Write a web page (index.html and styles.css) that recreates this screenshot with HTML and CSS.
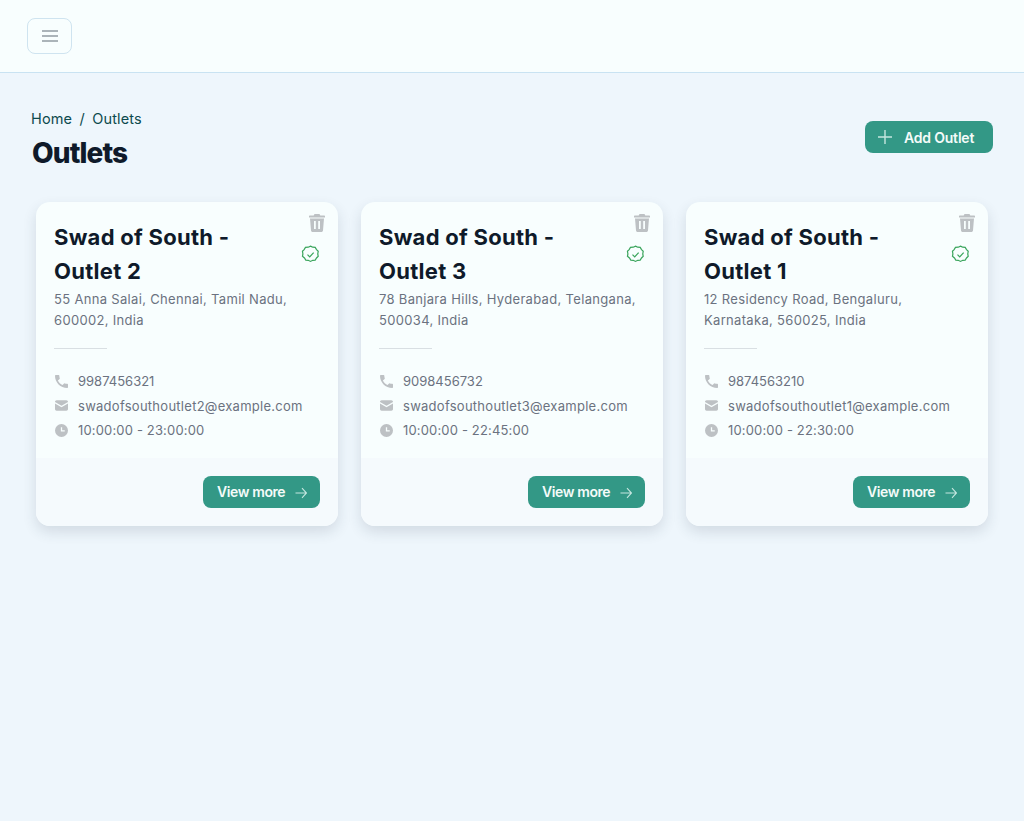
FILE: index.html
```html
<!DOCTYPE html>
<html lang="en">
<head>
<meta charset="utf-8">
<title>Outlets</title>
<link rel="stylesheet" href="styles.css">
</head>
<body>
<svg class="sprite" aria-hidden="true">
  <symbol id="i-trash" viewBox="0 0 16 18"><path fill="#bdc1c4" fill-rule="evenodd" d="M5.500 0h5l.8 1.500H15c.6 0 1 .4 1 1v1H0v-1c0-.6.4-1 1-1h3.700zM1 4.500h14l-1 12c-.1.9-.8 1.500-1.600 1.500H3.600c-.8 0-1.500-.6-1.600-1.500zM5 7v8h1.800V7zm4.200 0v8H11V7z"/></symbol>
  <symbol id="i-badge" viewBox="0 0 17 17"><path fill="none" stroke="#3ba55d" stroke-width="1.100" d="M8.500 1l2 1 2.200.2 1.200 1.900 1.500 1.500-.4 2.400.4 2.100-1.500 1.500-1.200 1.900-2.200.2-2 1-2-1-2.200-.2-1.200-1.900L1.300 10.100l.4-2.100-.4-2.400L2.800 4.100 4 2.200l2.500-.2z"/><path fill="none" stroke="#3ba55d" stroke-width="1.100" d="M5.800 8.600l2 2 3.500-3.800"/></symbol>
  <symbol id="i-phone" viewBox="3 3 18 18"><path fill="#bdc1c4" d="M7 10.500c1.400 2.800 3.600 5 6.500 6.500l2-2.200c.3-.3.700-.4 1-.2 1.100.4 2.500.6 3.500.6.600 0 1 .4 1 1V20c0 .6-.4 1-1 1C10.600 21 3 13.400 3 4c0-.6.400-1 1-1h4c.6 0 1 .4 1 1 0 1.300.2 2.500.6 3.600.1.300 0 .7-.2 1z"/></symbol>
  <symbol id="i-mail" viewBox="2 3 20 18"><path fill="#bdc1c4" d="M2 6.500C2 5.100 3.100 4 4.500 4h15C20.900 4 22 5.100 22 6.500v.3l-10 5.500L2 6.800zM2 9.100V17.500C2 18.900 3.100 20 4.500 20h15c1.400 0 2.500-1.100 2.500-2.500V9.100l-10 5.500z"/></symbol>
  <symbol id="i-clock" viewBox="2 2 20 20"><path fill="#bdc1c4" fill-rule="evenodd" d="M12 2a10 10 0 1 0 0 20 10 10 0 0 0 0-20zm1 5h-2v6.500h6v-2h-4z"/></symbol>
  <symbol id="i-arrow" viewBox="0 0 12 12"><path d="M.5 6h11M7 1.200L11.500 6 7 10.800" stroke="#c5e6df" stroke-width="1.100" fill="none"/></symbol>
</svg>
<header class="topbar">
  <button class="menu-btn" aria-label="Menu">
    <svg width="16" height="12" viewBox="0 0 16 12"><path d="M0 1h16M0 6h16M0 11h16" stroke="#5f6b75" stroke-width="1.100" fill="none"/></svg>
  </button>
</header>
<main class="page">
  <div class="page-head">
    <div>
      <nav class="crumbs"><span>Home</span><span>/</span><span>Outlets</span></nav>
      <h1 class="page-title">Outlets</h1>
    </div>
    <button class="btn btn-add">
      <svg width="14" height="14" viewBox="0 0 14 14"><path d="M7 0v14M0 7h14" stroke="#c5e6df" stroke-width="1.400" fill="none"/></svg>
      <span>Add Outlet</span>
    </button>
  </div>
  <section class="grid">
    <article class="card">
      <div class="card-body">
        <svg class="trash"><use href="#i-trash"/></svg>
        <div class="title-row">
          <h2 class="card-title">Swad of South - Outlet 2</h2>
          <svg class="badge"><use href="#i-badge"/></svg>
        </div>
        <p class="address">55 Anna Salai, Chennai, Tamil Nadu, 600002, India</p>
        <hr class="rule">
        <ul class="info">
          <li><svg class="ico"><use href="#i-phone"/></svg><span class="phone">9987456321</span></li>
          <li><svg class="ico"><use href="#i-mail"/></svg><span>swadofsouthoutlet2@example.com</span></li>
          <li><svg class="ico"><use href="#i-clock"/></svg><span class="hours">10:00:00 - 23:00:00</span></li>
        </ul>
      </div>
      <div class="card-foot">
        <button class="btn btn-more"><span class="more-label">View more</span><svg class="arrow"><use href="#i-arrow"/></svg></button>
      </div>
    </article>
    <article class="card">
      <div class="card-body">
        <svg class="trash"><use href="#i-trash"/></svg>
        <div class="title-row">
          <h2 class="card-title">Swad of South - Outlet 3</h2>
          <svg class="badge"><use href="#i-badge"/></svg>
        </div>
        <p class="address">78 Banjara Hills, Hyderabad, Telangana, 500034, India</p>
        <hr class="rule">
        <ul class="info">
          <li><svg class="ico"><use href="#i-phone"/></svg><span class="phone">9098456732</span></li>
          <li><svg class="ico"><use href="#i-mail"/></svg><span>swadofsouthoutlet3@example.com</span></li>
          <li><svg class="ico"><use href="#i-clock"/></svg><span class="hours">10:00:00 - 22:45:00</span></li>
        </ul>
      </div>
      <div class="card-foot">
        <button class="btn btn-more"><span class="more-label">View more</span><svg class="arrow"><use href="#i-arrow"/></svg></button>
      </div>
    </article>
    <article class="card">
      <div class="card-body">
        <svg class="trash"><use href="#i-trash"/></svg>
        <div class="title-row">
          <h2 class="card-title">Swad of South - Outlet 1</h2>
          <svg class="badge"><use href="#i-badge"/></svg>
        </div>
        <p class="address">12 Residency Road, Bengaluru, Karnataka, 560025, India</p>
        <hr class="rule">
        <ul class="info">
          <li><svg class="ico"><use href="#i-phone"/></svg><span class="phone">9874563210</span></li>
          <li><svg class="ico"><use href="#i-mail"/></svg><span>swadofsouthoutlet1@example.com</span></li>
          <li><svg class="ico"><use href="#i-clock"/></svg><span class="hours">10:00:00 - 22:30:00</span></li>
        </ul>
      </div>
      <div class="card-foot">
        <button class="btn btn-more"><span class="more-label">View more</span><svg class="arrow"><use href="#i-arrow"/></svg></button>
      </div>
    </article>
  </section>
</main>
</body>
</html>
```
FILE: styles.css
```css
* { box-sizing: border-box; }
html, body { margin: 0; padding: 0; }
body {
  min-height: 821px;
  background: #eef6fc;
  font-family: Inter, "Liberation Sans", sans-serif;
  color: #0f1a2a;
}
.sprite { display: none; }
.topbar {
  height: 73px;
  background: #f8fefe;
  border-bottom: 1px solid #c9e3f2;
  padding: 18px 27px;
}
.menu-btn {
  width: 45px;
  height: 36px;
  display: flex;
  align-items: center;
  justify-content: center;
  padding: 0;
  background: transparent;
  border: 1px solid #cfe4f0;
  border-radius: 8px;
}
.page { padding: 37px 31px 0 31px; }
.page-head {
  display: flex;
  justify-content: space-between;
  align-items: flex-start;
}
.crumbs {
  display: flex;
  gap: 7.5px;
  font-size: 14.5px;
  line-height: 18px;
  letter-spacing: 0.1px;
  color: #0c4a4e;
}
.page-title {
  margin: 8px 0 0 1px;
  font-size: 28px;
  line-height: 34px;
  font-weight: 800;
  letter-spacing: -0.9px;
  color: #0f1a2a;
}
.btn {
  display: inline-flex;
  align-items: center;
  height: 32px;
  border: 0;
  border-radius: 8px;
  background: #339886;
  color: #f4fbf9;
  font-family: Inter, "Liberation Sans", sans-serif;
  font-size: 14px;
  font-weight: 600;
}
.btn-add {
  width: 128px;
  padding: 0 0 0 13px;
  gap: 12px;
  margin-top: 11px;
  letter-spacing: -0.2px;
}
.btn-more {
  width: 117px;
  padding: 0 13px 0 14px;
  justify-content: space-between;
  letter-spacing: -0.4px;
}
.more-label { margin-bottom: 2px; }
.arrow { width: 12px; height: 12px; margin-top: 1px; }
.grid {
  display: grid;
  grid-template-columns: repeat(3, 302px);
  column-gap: 23px;
  margin: 32px 0 0 5px;
}
.card {
  height: 324px;
  display: flex;
  flex-direction: column;
  border-radius: 14px;
  overflow: hidden;
  background: #f8fefe;
  box-shadow: 0 6px 14px rgba(40, 60, 80, 0.14);
}
.card-body {
  position: relative;
  height: 256px;
  padding: 18px 18px 0;
}
.trash { position: absolute; top: 12px; right: 13px; width: 16px; height: 18px; }
.title-row {
  display: flex;
  align-items: center;
  justify-content: space-between;
}
.card-title {
  margin: 0;
  width: 200px;
  font-size: 22px;
  line-height: 34px;
  font-weight: 700;
  letter-spacing: 0.27px;
  color: #0f1a2a;
}
.badge { width: 19px; height: 19px; }
.address {
  margin: 1px 0 0;
  width: 262px;
  font-size: 13px;
  line-height: 21px;
  letter-spacing: 0.32px;
  color: #6b7280;
}
.rule {
  width: 53px;
  height: 1px;
  margin: 17px 0 0;
  border: 0;
  background: #d9dfe3;
}
.info {
  list-style: none;
  margin: 20px 0 0;
  padding: 0;
  font-size: 13px;
  letter-spacing: 0.27px;
  color: #6b7280;
}
.info li {
  display: flex;
  align-items: center;
  gap: 10px;
  height: 24.5px;
}
.info .phone { letter-spacing: 0; }
.info .hours { letter-spacing: 0.16px; }
.ico { width: 13px; height: 13px; margin-left: 1px; }
.card-foot {
  flex: 1;
  display: flex;
  justify-content: flex-end;
  align-items: flex-start;
  padding: 18px 18px 0;
  background: #f5fafd;
}
```
